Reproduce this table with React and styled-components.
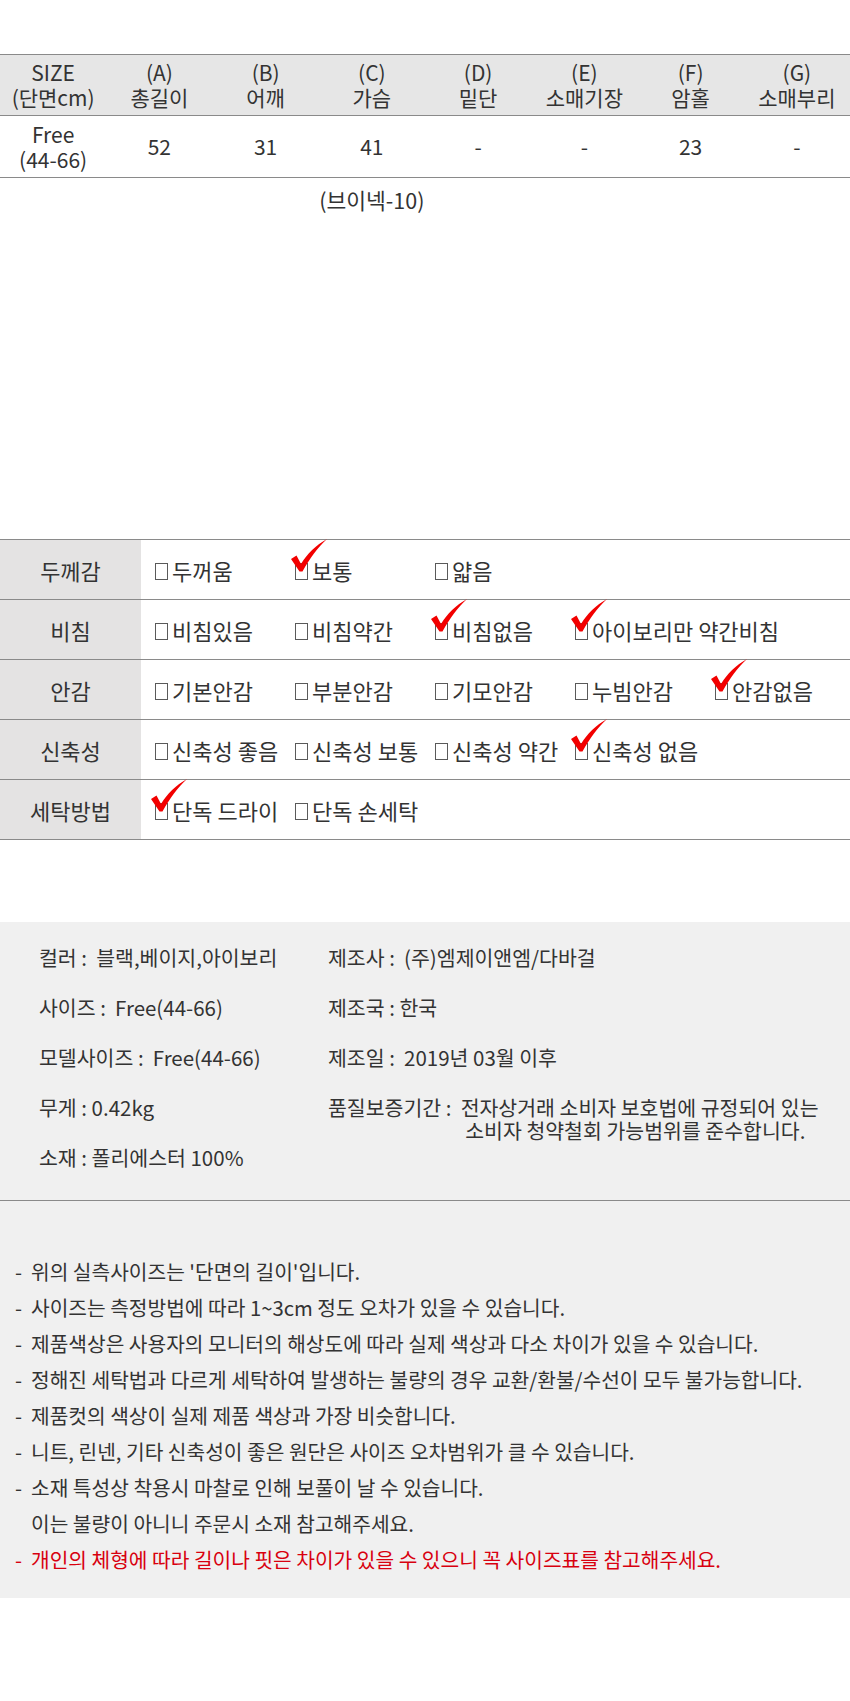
import styled, { createGlobalStyle } from 'styled-components';

const GlobalStyle = createGlobalStyle`
    body {
        margin: 0;
        background: #fff;
        font-family: "Noto Sans CJK KR", "Noto Sans", sans-serif;
        color: #333;
    }
`;

const Page = styled.div`
    width: 850px;
    padding-top: 54px;
`;

const SizeTable = styled.div`
    display: grid;
    grid-template-columns: repeat(8, 1fr);
    border-top: 1px solid #8a8a8a;
`;

const SizeCell = styled.div`
    display: flex;
    flex-direction: column;
    align-items: center;
    justify-content: center;
    height: ${(p) => (p.$head ? 60 : 61)}px;
    background: ${(p) => (p.$head ? '#e6e6e6' : '#fff')};
    border-bottom: 1px solid #8a8a8a;
    font-size: 21px;
    line-height: 25px;
    white-space: nowrap;
`;

const Caption = styled.div`
    display: grid;
    grid-template-columns: repeat(8, 1fr);
    margin-top: 9px;
    font-size: 21.5px;
    line-height: 25px;

    span {
        grid-column: 4;
        justify-self: center;
        white-space: nowrap;
    }
`;

const FabricTable = styled.div`
    margin-top: 327px;
    border-top: 1px solid #8a8a8a;
`;

const FabricRow = styled.div`
    display: flex;
    height: 59px;
    border-bottom: 1px solid #8a8a8a;
`;

const Label = styled.div`
    width: 141px;
    flex-shrink: 0;
    display: flex;
    align-items: center;
    justify-content: center;
    background: #e4e3e3;
    font-size: 22px;
`;

const Options = styled.div`
    display: grid;
    grid-template-columns: repeat(5, 140px);
    align-items: center;
    padding-left: 14px;
`;

const Option = styled.div`
    display: flex;
    align-items: center;
    gap: 4px;
    font-size: 22px;
    white-space: nowrap;
`;

const Box = styled.span`
    position: relative;
    flex-shrink: 0;
    display: inline-block;
    width: 11px;
    height: 15px;
    border: 1.5px solid #5a5a5a;
    margin-top: 3px;
`;

const Check = styled.svg`
    position: absolute;
    left: -5px;
    top: -25px;
    width: 36px;
    height: 33px;
`;

const GrayPanel = styled.div`
    margin-top: 82px;
    background: #f0f0f0;
`;

const InfoWrap = styled.div`
    display: flex;
    padding: 11px 0 17px 39px;
`;

const InfoCol = styled.div`
    display: flex;
    flex-direction: column;
    width: ${(p) => p.$w || 'auto'};
`;

const InfoItem = styled.div`
    display: flex;
    height: 50px;
    padding-top: 13px;
    box-sizing: border-box;
    font-size: 20.5px;
    line-height: 23px;
    white-space: pre;
`;

const InfoValue = styled.div`
    display: flex;
    flex-direction: column;
`;

const Divider = styled.div`
    border-top: 1px solid #8a8a8a;
`;

const Notes = styled.div`
    padding: 52px 0 21px 15px;
`;

const Note = styled.div`
    display: flex;
    font-size: 20.3px;
    line-height: 36px;
    white-space: nowrap;
    color: ${(p) => (p.$red ? '#d8000f' : '#333')};
    padding-left: ${(p) => (p.$indent ? 16 : 0)}px;
`;

const Dash = styled.span`
    display: inline-block;
    width: 16px;
`;

const sizeHead = [
    ['SIZE', '(단면cm)'],
    ['(A)', '총길이'],
    ['(B)', '어깨'],
    ['(C)', '가슴'],
    ['(D)', '밑단'],
    ['(E)', '소매기장'],
    ['(F)', '암홀'],
    ['(G)', '소매부리'],
];

const sizeRow = [['Free', '(44-66)'], ['52'], ['31'], ['41'], ['-'], ['-'], ['23'], ['-']];

const fabric = [
    { label: '두께감', items: [['두꺼움'], ['보통', 1], ['얇음']] },
    { label: '비침', items: [['비침있음'], ['비침약간'], ['비침없음', 1], ['아이보리만 약간비침', 1]] },
    { label: '안감', items: [['기본안감'], ['부분안감'], ['기모안감'], ['누빔안감'], ['안감없음', 1]] },
    { label: '신축성', items: [['신축성 좋음'], ['신축성 보통'], ['신축성 약간'], ['신축성 없음', 1]] },
    { label: '세탁방법', items: [['단독 드라이', 1], ['단독 손세탁']] },
];

const leftInfo = [
    '컬러 :  블랙,베이지,아이보리',
    '사이즈 :  Free(44-66)',
    '모델사이즈 :  Free(44-66)',
    '무게 : 0.42kg',
    '소재 : 폴리에스터 100%',
];

const rightInfo = ['제조사 :  (주)엠제이앤엠/다바걸', '제조국 : 한국', '제조일 :  2019년 03월 이후'];

const notes = [
    "위의 실측사이즈는 '단면의 길이'입니다.",
    '사이즈는 측정방법에 따라 1~3cm 정도 오차가 있을 수 있습니다.',
    '제품색상은 사용자의 모니터의 해상도에 따라 실제 색상과 다소 차이가 있을 수 있습니다.',
    '정해진 세탁법과 다르게 세탁하여 발생하는 불량의 경우 교환/환불/수선이 모두 불가능합니다.',
    '제품컷의 색상이 실제 제품 색상과 가장 비슷합니다.',
    '니트, 린넨, 기타 신축성이 좋은 원단은 사이즈 오차범위가 클 수 있습니다.',
    '소재 특성상 착용시 마찰로 인해 보풀이 날 수 있습니다.',
];

function CheckMark() {
    return (
        <Check viewBox="0 0 36 33">
            <path d="M0 20 L5.5 16.5 L10 25 C16 15 25 6 36 0 C27 8.5 18.5 19.5 11.5 32.5 L8.5 32.5 Z" fill="#f20000" />
        </Check>
    );
}

export default function App() {
    return (
        <>
            <GlobalStyle />
            <Page>
                {/* Size chart */}
                <SizeTable>
                    {sizeHead.map((c, i) => (
                        <SizeCell $head key={'h' + i}>
                            {c.map((t) => (
                                <span key={t}>{t}</span>
                            ))}
                        </SizeCell>
                    ))}
                    {sizeRow.map((c, i) => (
                        <SizeCell key={'r' + i}>
                            {c.map((t) => (
                                <span key={t}>{t}</span>
                            ))}
                        </SizeCell>
                    ))}
                </SizeTable>
                <Caption>
                    <span>(브이넥-10)</span>
                </Caption>

                {/* Fabric info */}
                <FabricTable>
                    {fabric.map((row) => (
                        <FabricRow key={row.label}>
                            <Label>{row.label}</Label>
                            <Options>
                                {row.items.map(([text, checked]) => (
                                    <Option key={text}>
                                        <Box>{checked && <CheckMark />}</Box>
                                        {text}
                                    </Option>
                                ))}
                            </Options>
                        </FabricRow>
                    ))}
                </FabricTable>

                {/* Product info + notes */}
                <GrayPanel>
                    <InfoWrap>
                        <InfoCol $w="289px">
                            {leftInfo.map((t) => (
                                <InfoItem key={t}>{t}</InfoItem>
                            ))}
                        </InfoCol>
                        <InfoCol>
                            {rightInfo.map((t) => (
                                <InfoItem key={t}>{t}</InfoItem>
                            ))}
                            <InfoItem>
                                {'품질보증기간 :  '}
                                <InfoValue>
                                    <span>전자상거래 소비자 보호법에 규정되어 있는</span>
                                    <span> 소비자 청약철회 가능범위를 준수합니다.</span>
                                </InfoValue>
                            </InfoItem>
                        </InfoCol>
                    </InfoWrap>
                    <Divider />
                    <Notes>
                        {notes.map((t) => (
                            <Note key={t}>
                                <Dash>-</Dash>
                                {t}
                            </Note>
                        ))}
                        <Note $indent>이는 불량이 아니니 주문시 소재 참고해주세요.</Note>
                        <Note $red>
                            <Dash>-</Dash>
                            개인의 체형에 따라 길이나 핏은 차이가 있을 수 있으니 꼭 사이즈표를 참고해주세요.
                        </Note>
                    </Notes>
                </GrayPanel>
            </Page>
        </>
    );
}
